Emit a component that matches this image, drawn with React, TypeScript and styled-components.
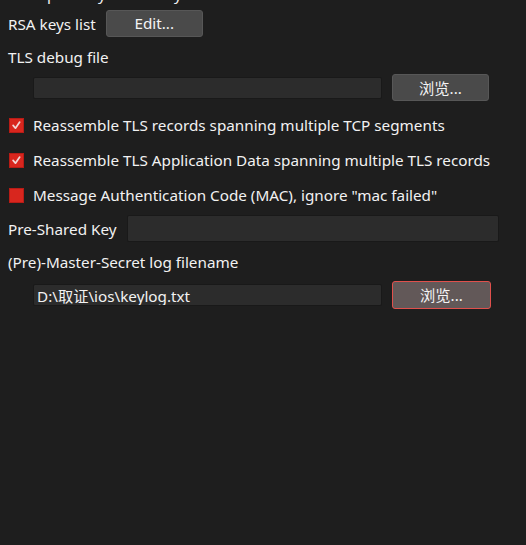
import React from 'react';
import styled, { createGlobalStyle } from 'styled-components';

const GlobalStyle = createGlobalStyle`
  html, body {
    margin: 0;
    padding: 0;
    background: #1e1e1e;
  }
  body {
    font-family: "Noto Sans", "Noto Sans CJK SC", sans-serif;
    font-size: 15.25px;
    color: #f2f2f2;
  }
`;

function App() {
  const [checks, setChecks] = React.useState([true, true, false]);

  const toggle = (i: number) => {
    setChecks((prev) => prev.map((c, idx) => (idx === i ? !c : c)));
  };

  return (
    <Page>
      <GlobalStyle />
      <ClippedTitle>Transport Layer Security</ClippedTitle>

      <Row $height={27} $top={6}>
        <Label>RSA keys list</Label>
        <Button $width={97}>Edit...</Button>
      </Row>

      <Row $height={22} $top={9}>
        <Label>TLS debug file</Label>
      </Row>

      <Row $height={27} $top={6} $indent={25}>
        <TextInput $width={349} $height={22} />
        <Spacer $w={10} />
        <Button $width={97}>浏览...</Button>
      </Row>

      {[
        'Reassemble TLS records spanning multiple TCP segments',
        'Reassemble TLS Application Data spanning multiple TLS records',
        'Message Authentication Code (MAC), ignore "mac failed"',
      ].map((text, i) => (
        <CheckRow key={text} onClick={() => toggle(i)}>
          <Box>
            {checks[i] && (
              <svg width="15" height="15" viewBox="0 0 15 15">
                <path
                  d="M3.6 7.4 L6.3 10.6 L11.2 3.6"
                  fill="none"
                  stroke="#f1d6d6"
                  strokeWidth="2"
                  strokeLinecap="round"
                  strokeLinejoin="round"
                />
              </svg>
            )}
          </Box>
          <span>{text}</span>
        </CheckRow>
      ))}

      <Row $height={27} $top={9}>
        <Label>Pre-Shared Key</Label>
        <TextInput $width={372} $height={27} />
      </Row>

      <Row $height={22} $top={9}>
        <Label>(Pre)-Master-Secret log filename</Label>
      </Row>

      <Row $height={28} $top={8} $indent={25}>
        <TextInput $width={349} $height={22} defaultValue="D:\取证\ios\keylog.txt" />
        <Spacer $w={10} />
        <Button $width={99} $focused>
          浏览...
        </Button>
      </Row>
    </Page>
  );
}

const Page = styled.div`
  width: 526px;
  height: 545px;
  overflow: hidden;
  display: flex;
  flex-direction: column;
  padding-left: 8px;
  box-sizing: border-box;
`;

const ClippedTitle = styled.div`
  height: 20px;
  line-height: 20px;
  margin-top: -16px;
  white-space: nowrap;
`;

const Row = styled.div<{ $height: number; $top?: number; $indent?: number }>`
  display: flex;
  align-items: center;
  height: ${(p) => p.$height}px;
  margin-top: ${(p) => p.$top ?? 0}px;
  padding-left: ${(p) => p.$indent ?? 0}px;
`;

const Label = styled.span`
  white-space: nowrap;
  margin-right: 10px;
`;

const Spacer = styled.div<{ $w: number }>`
  width: ${(p) => p.$w}px;
  flex-shrink: 0;
`;

const Button = styled.button<{ $width: number; $focused?: boolean }>`
  width: ${(p) => p.$width}px;
  height: 100%;
  flex-shrink: 0;
  font-family: "Noto Sans", "Noto Sans CJK SC", sans-serif;
  font-size: 15.25px;
  color: #f4f4f4;
  background: ${(p) => (p.$focused ? '#625858' : '#4a4a4a')};
  border: 1px solid ${(p) => (p.$focused ? '#e0504c' : '#575757')};
  border-radius: 3px;
  padding: 0 0 2px;
  box-sizing: border-box;
`;

const TextInput = styled.input<{ $width: number; $height: number }>`
  width: ${(p) => p.$width}px;
  height: ${(p) => p.$height}px;
  box-sizing: border-box;
  flex-shrink: 0;
  background: #2c2c2c;
  border: 1px solid #191919;
  border-radius: 2px;
  color: #f2f2f2;
  font-family: "Noto Sans", "Noto Sans CJK SC", sans-serif;
  font-size: 15.25px;
  padding: 0 0 1px 3px;
  outline: none;
`;

const CheckRow = styled.div`
  display: flex;
  align-items: center;
  height: 22px;
  margin-top: 13px;
  white-space: nowrap;
  cursor: default;
  &:first-of-type {
    margin-top: 12px;
  }
`;

const Box = styled.div`
  width: 15px;
  height: 15px;
  margin: 0 9px 0 1px;
  background: #d8261e;
  border: 1px solid #b81c16;
  box-sizing: border-box;
  flex-shrink: 0;
  display: flex;
  align-items: center;
  justify-content: center;
`;

export default App;
